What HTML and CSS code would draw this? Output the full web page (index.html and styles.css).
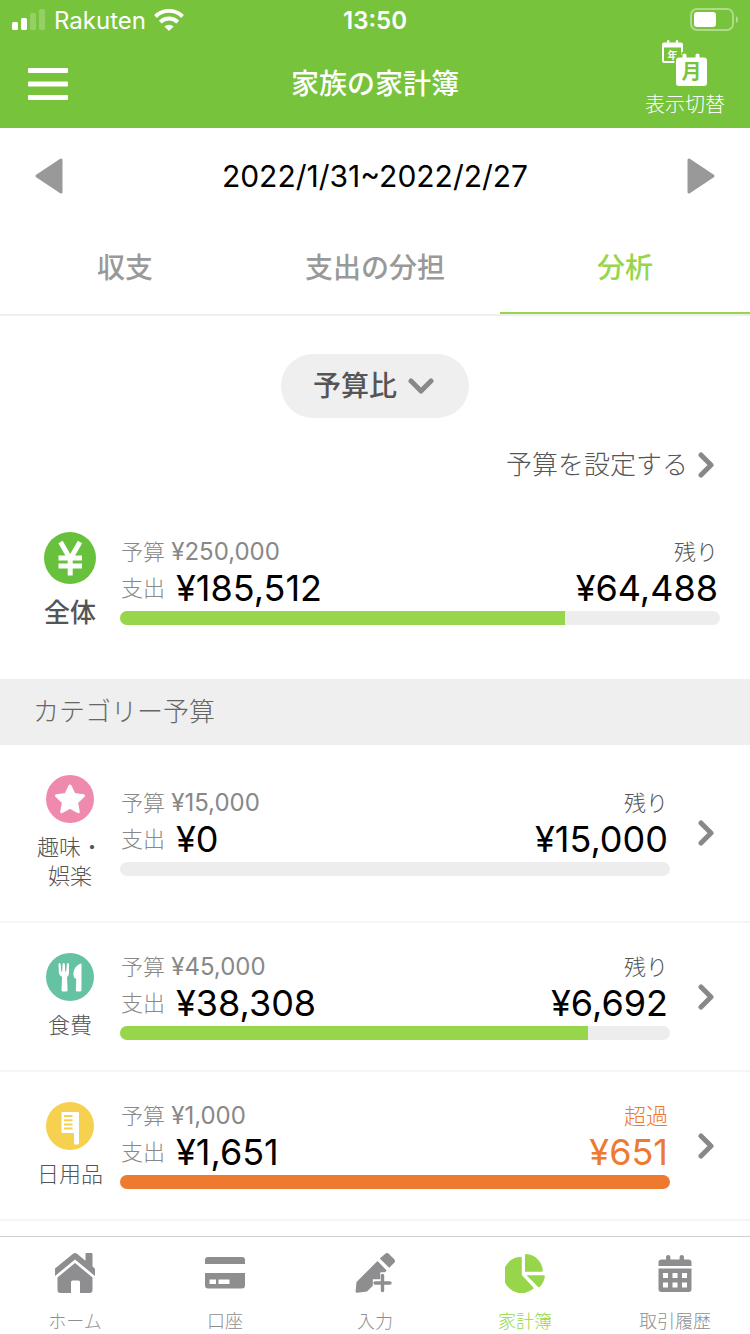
FILE: index.html
```html
<!DOCTYPE html>
<html lang="ja">
<head>
    <meta charset="UTF-8">
    <meta name="viewport" content="width=device-width, initial-scale=1.0">
    <title>家族の家計簿</title>
    <link rel="stylesheet" href="styles.css">
</head>
<body>
    <header class="header">
        <div class="status-bar">
            <div class="carrier">
                <svg width="34" height="22" viewBox="0 0 34 22" fill="#fff">
                    <rect x="0" y="13" width="6" height="8" rx="1.5"/>
                    <rect x="9" y="9" width="6" height="12" rx="1.5"/>
                    <rect x="18" y="4" width="6" height="17" rx="1.5" opacity=".22"/>
                    <rect x="27" y="0" width="6" height="21" rx="1.5" opacity=".22"/>
                </svg>
                <span>Rakuten</span>
                <svg width="30" height="22" viewBox="0 0 30 22" fill="none" stroke="#fff" stroke-width="4">
                    <path d="M1.500 7.500a19 19 0 0 1 27 0"/>
                    <path d="M6.300 13.200a12.300 12.300 0 0 1 17.400 0"/>
                    <path d="M15 22l-4.600-4.400a6.600 6.600 0 0 1 9.200 0z" fill="#fff" stroke="none"/>
                </svg>
            </div>
            <div class="time">13:50</div>
            <svg class="battery" width="48" height="24" viewBox="0 0 48 24">
                <rect x="1" y="1" width="42" height="21" rx="6" fill="none" stroke="#fff" stroke-opacity=".4" stroke-width="2"/>
                <rect x="4" y="4" width="22" height="15" rx="3" fill="#fff"/>
                <path d="M46 8q2 1 2 3.500t-2 3.500z" fill="#fff" opacity=".45"/>
            </svg>
        </div>
        <div class="title-bar">
            <button class="menu-button" type="button" aria-label="メニュー">
                <svg width="40" height="32" viewBox="0 0 40 32" fill="#fff">
                    <rect width="40" height="5" rx="1"/>
                    <rect y="13.500" width="40" height="5" rx="1"/>
                    <rect y="27" width="40" height="5" rx="1"/>
                </svg>
            </button>
            <h1 class="title">家族の家計簿</h1>
            <button class="switch-button" type="button">
                <svg width="46" height="48" viewBox="0 0 46 48">
                    <path d="M2 2.500h3V1q0-1 1.200-1t1.200 1v1.500h6.400V1q0-1 1.200-1t1.200 1v1.500H19q2 0 2 2V16H2v4.600h12V23H2q-2 0-2-2V4.500q0-2 2-2z" fill="#fff"/>
                    <rect x="2" y="7.500" width="17" height="13.500" fill="#77c33b"/>
                    <text class="calendar-year" x="10.500" y="18.500">年</text>
                    <path d="M12.500 48V18q0-3 4-3h3v-3h25v36z" fill="#77c33b"/>
                    <path d="M17 17.500h3.500V15q0-1.500 2-1.500t2 1.500v2.500h9V15q0-1.500 2-1.500t2 1.500v2.500H42q3 0 3 3V43q0 3-3 3H17q-3 0-3-3V20.500q0-3 3-3z" fill="#fff"/>
                    <text class="calendar-month" x="29.500" y="39">月</text>
                </svg>
                <span>表示切替</span>
            </button>
        </div>
    </header>

    <main>
        <div class="period">
            <button class="period-button" type="button" aria-label="前の期間">
                <svg width="28" height="36" viewBox="0 0 28 36"><path d="M26 2v32L2 18z" fill="#999" stroke="#999" stroke-width="3" stroke-linejoin="round"/></svg>
            </button>
            <span>2022/1/31~2022/2/27</span>
            <button class="period-button" type="button" aria-label="次の期間">
                <svg width="28" height="36" viewBox="0 0 28 36"><path d="M2 2v32l24-16z" fill="#999" stroke="#999" stroke-width="3" stroke-linejoin="round"/></svg>
            </button>
        </div>

        <nav class="tabs">
            <a class="tab" href="#balance">収支</a>
            <a class="tab" href="#share">支出の分担</a>
            <a class="tab active" href="#analysis">分析</a>
        </nav>

        <div class="select-wrap">
            <select class="select" aria-label="表示内容">
                <option>予算比</option>
            </select>
            <svg class="select-arrow" width="26" height="16" viewBox="0 0 26 16"><path d="M3 3l10 10L23 3" fill="none" stroke="#888" stroke-width="5" stroke-linecap="round" stroke-linejoin="round"/></svg>
        </div>

        <a class="set-budget" href="#budget">
            <span>予算を設定する</span>
            <svg width="16" height="26" viewBox="0 0 16 26"><path d="M3 3l10 10L3 23" fill="none" stroke="#888" stroke-width="5" stroke-linecap="round" stroke-linejoin="round"/></svg>
        </a>

        <section class="row total">
            <div class="category">
                <svg width="52" height="52" viewBox="0 0 52 52">
                    <circle cx="26" cy="26" r="26" fill="#68c13c"/>
                    <path d="M16.500 10L26.200 27 36 10M26.200 26v17.500M14.500 26h23.500M14.500 34h23.500" fill="none" stroke="#fff" stroke-width="5"/>
                </svg>
                <span class="category-name">全体</span>
            </div>
            <div class="budget">
                <div class="line">
                    <span class="label">予算 <span class="amount-small">¥250,000</span></span>
                    <span class="rest">残り</span>
                </div>
                <div class="line line-large">
                    <span class="label">支出</span>
                    <span class="amount">¥185,512</span>
                    <span class="amount rest-amount">¥64,488</span>
                </div>
                <div class="bar"><div class="bar-fill" style="width: 74.2%"></div></div>
            </div>
        </section>

        <h2 class="section-title">カテゴリー予算</h2>

        <a class="row" href="#hobby">
            <div class="category">
                <svg width="48" height="48" viewBox="0 0 48 48">
                    <circle cx="24" cy="24" r="24" fill="#ef8aae"/>
                    <path d="M24 11l4 8.500 9.500 1.200-7 6.600 1.800 9.500-8.300-4.500-8.300 4.500 1.800-9.500-7-6.600 9.500-1.200z" fill="#fff" stroke="#fff" stroke-width="3" stroke-linejoin="round"/>
                </svg>
                <span class="category-name">趣味・<br>娯楽</span>
            </div>
            <div class="budget">
                <div class="line">
                    <span class="label">予算 <span class="amount-small">¥15,000</span></span>
                    <span class="rest">残り</span>
                </div>
                <div class="line line-large">
                    <span class="label">支出</span>
                    <span class="amount">¥0</span>
                    <span class="amount rest-amount">¥15,000</span>
                </div>
                <div class="bar"></div>
            </div>
            <svg width="16" height="26" viewBox="0 0 16 26"><path d="M3 3l10 10L3 23" fill="none" stroke="#888" stroke-width="5" stroke-linecap="round" stroke-linejoin="round"/></svg>
        </a>

        <a class="row" href="#food">
            <div class="category">
                <svg width="48" height="48" viewBox="0 0 48 48">
                    <circle cx="24" cy="24" r="24" fill="#65c2a2"/>
                    <path d="M12.500 11.500q0-1.500 1-1.500t1.200 1.500l.5 7h1l.3-7q0-1.500 1.200-1.500t1.200 1.500l.3 7h1l.6-7q.1-1.500 1.200-1.500t1 1.500V20q-.4 3.300-2 4l.6 13q0 1.500-1.500 1.500h-3.200q-1.500 0-1.400-1.500l.6-13q-3-1.500-3.200-4z" fill="#fff"/>
                    <path d="M35 10.500q.5 0 .5 1V37q0 1.500-1.500 1.500h-2.800q-1.500 0-1.400-1.500l.5-11-2.300-1.500q-1.500-4 .5-8.500 2.500-4.500 6.500-5.500z" fill="#fff"/>
                </svg>
                <span class="category-name">食費</span>
            </div>
            <div class="budget">
                <div class="line">
                    <span class="label">予算 <span class="amount-small">¥45,000</span></span>
                    <span class="rest">残り</span>
                </div>
                <div class="line line-large">
                    <span class="label">支出</span>
                    <span class="amount">¥38,308</span>
                    <span class="amount rest-amount">¥6,692</span>
                </div>
                <div class="bar"><div class="bar-fill" style="width: 85.1%"></div></div>
            </div>
            <svg width="16" height="26" viewBox="0 0 16 26"><path d="M3 3l10 10L3 23" fill="none" stroke="#888" stroke-width="5" stroke-linecap="round" stroke-linejoin="round"/></svg>
        </a>

        <a class="row over" href="#daily">
            <div class="category">
                <svg width="48" height="48" viewBox="0 0 48 48">
                    <circle cx="24" cy="24" r="24" fill="#f6d04f"/>
                    <path d="M16.500 10H32q1 0 1 1v30.500q0 1-1 1h-3q-1 0-1-1V31H16.500q-1 0-1-1V11q0-1 1-1z" fill="#fff"/>
                    <path d="M18 14h8.500M18 18.200h8.500M18 22.400h8.500M18 26.600h8.500" stroke="#f6d04f" stroke-width="2"/>
                </svg>
                <span class="category-name">日用品</span>
            </div>
            <div class="budget">
                <div class="line">
                    <span class="label">予算 <span class="amount-small">¥1,000</span></span>
                    <span class="rest">超過</span>
                </div>
                <div class="line line-large">
                    <span class="label">支出</span>
                    <span class="amount">¥1,651</span>
                    <span class="amount rest-amount">¥651</span>
                </div>
                <div class="bar"><div class="bar-fill" style="width: 100%"></div></div>
            </div>
            <svg width="16" height="26" viewBox="0 0 16 26"><path d="M3 3l10 10L3 23" fill="none" stroke="#888" stroke-width="5" stroke-linecap="round" stroke-linejoin="round"/></svg>
        </a>
    </main>

    <nav class="bottom-nav">
        <a class="nav-item" href="#home">
            <svg width="40" height="40" viewBox="0 0 40 40" fill="currentColor">
                <path d="M0 15.500L18 .8q2-1.400 4 0l8.500 7V1q0-1 1-1h5q1 0 1 1v12.500l2.500 2.200V23L20 6.500 0 23z"/>
                <path d="M20 10l17.500 14.500V37q0 3-3 3H25V29q0-1.500-1.500-1.500h-6Q16 27.500 16 29v11H5.500q-3 0-3-3V24.500z"/>
            </svg>
            <span>ホーム</span>
        </a>
        <a class="nav-item" href="#account">
            <svg width="40" height="40" viewBox="0 0 40 40" fill="currentColor">
                <path d="M0 11V7q0-3 3-3h34q3 0 3 3v4z"/>
                <path fill-rule="evenodd" d="M0 20h40v12.500q0 3-3 3H3q-3 0-3-3zM4.500 26.500V31h6.500v-4.500zM13.500 26.500V31h11v-4.500z"/>
            </svg>
            <span>口座</span>
        </a>
        <a class="nav-item" href="#input">
            <svg width="40" height="40" viewBox="0 0 40 40" fill="currentColor">
                <path d="M24.800 5.500L30 1q2-2 4 0l5 5q2 2 0 4l-4.800 4.700z"/>
                <path d="M22.500 8l9.200 9.500-1.700 1.700h-4.700v7h-7.500v6.600L12 38.500l-10 1.300q-1.500.2-1.400-1.300L1.500 29z"/>
                <path d="M27.500 22.500v15M20 30h15" fill="none" stroke="currentColor" stroke-width="3.400" stroke-linecap="round"/>
            </svg>
            <span>入力</span>
        </a>
        <a class="nav-item active" href="#book">
            <svg width="40" height="40" viewBox="0 0 40 40" fill="currentColor">
                <path d="M16.800 5.200V22l11.500 12.500q.8 1-.3 1.600A18.200 18.200 0 1 1 15.300 3.800q1.500-.1 1.500 1.400z"/>
                <path d="M20 2.300q0-1.200 1.200-1.200A17.500 17.500 0 0 1 37.800 17.500q0 1.200-1.200 1.200H20z"/>
                <path d="M21.500 22.200h17q1.500 0 1.400 1.400-.8 6-5 10.200-1 1-2 0z"/>
            </svg>
            <span>家計簿</span>
        </a>
        <a class="nav-item" href="#history">
            <svg width="40" height="40" viewBox="0 0 40 40" fill="currentColor">
                <path d="M3.500 13V9.500q0-3 3-3H11V4q0-2 2.200-2t2.200 2v2.500h9.200V4q0-2 2.200-2T29 4v2.500h4.500q3 0 3 3V13z"/>
                <path fill-rule="evenodd" d="M3.500 15.500h33V36q0 3-3 3h-27q-3 0-3-3zM8 20v5h5v-5zM17.500 20v5h5v-5zM27 20v5h5v-5zM8 29.500v5h5v-5zM17.500 29.500v5h5v-5zM27 29.500v5h5v-5z"/>
            </svg>
            <span>取引履歴</span>
        </a>
    </nav>
</body>
</html>
```
FILE: styles.css
```css
:root {
    --header-green: #77c33b;
    --green: #97d64b;
    --orange: #ee7a30;
    --gray-bg: #efefef;
    --gray: #888;
    --text: #555;
}

* {
    box-sizing: border-box;
}

body {
    margin: 0;
    min-height: 100vh;
    display: flex;
    flex-direction: column;
    background-color: #fff;
    color: var(--text);
    font-family: Inter, 'Noto Sans CJK JP', sans-serif;
    font-weight: 300;
}

svg {
    display: block;
    flex-shrink: 0;
}

a {
    color: inherit;
    text-decoration: none;
}

button {
    padding: 0;
    border: none;
    background: none;
    color: inherit;
    font: inherit;
    cursor: pointer;
}

.header {
    background-color: var(--header-green);
    color: #fff;
}

.status-bar {
    display: grid;
    grid-template-columns: 1fr auto 1fr;
    align-items: center;
    height: 40px;
    padding: 0 12px;
    font-size: 24px;
    font-weight: 400;
}

.carrier {
    display: flex;
    align-items: center;
    gap: 8px;
}

.time {
    font-weight: 600;
}

.battery {
    justify-self: end;
}

.title-bar {
    display: grid;
    grid-template-columns: 1fr auto 1fr;
    align-items: center;
    height: 88px;
    padding: 0 25px 4px;
}

.menu-button {
    justify-self: start;
    padding: 4px 3px 0;
}

.title {
    margin: 0;
    font-size: 28px;
    font-weight: 500;
}

.switch-button {
    justify-self: end;
    display: flex;
    flex-direction: column;
    align-items: center;
    padding-bottom: 2px;
    font-size: 20px;
    line-height: 34px;
}

.calendar-year,
.calendar-month {
    text-anchor: middle;
    font-weight: 700;
}

.calendar-year {
    fill: #fff;
    font-size: 10px;
}

.calendar-month {
    fill: var(--header-green);
    font-size: 20px;
}

.period {
    display: flex;
    justify-content: space-between;
    align-items: center;
    height: 96px;
    padding: 0 35px;
    color: #000;
    font-size: 30px;
    font-weight: 400;
}

.tabs {
    display: flex;
    height: 92px;
    border-bottom: 2px solid #eee;
}

.tab {
    flex: 1;
    height: 90px;
    border-bottom: 2px solid transparent;
    color: #999;
    font-size: 28px;
    font-weight: 500;
    line-height: 88px;
    text-align: center;
}

.tab.active {
    border-color: var(--green);
    color: var(--green);
}

.select-wrap {
    position: relative;
    width: fit-content;
    margin: 38px auto 27px;
}

.select {
    display: block;
    height: 64px;
    padding: 0 71px 0 32px;
    border: none;
    border-radius: 32px;
    background-color: var(--gray-bg);
    color: var(--text);
    font-family: inherit;
    font-size: 28px;
    font-weight: 500;
    appearance: none;
}

.select-arrow {
    position: absolute;
    top: 24px;
    right: 35px;
    pointer-events: none;
}

.set-budget {
    display: flex;
    justify-content: flex-end;
    align-items: center;
    gap: 10px;
    padding-right: 36px;
    font-size: 26px;
    line-height: 39px;
}

.row {
    display: flex;
    align-items: center;
    padding: 30px 36px 30px 20px;
    border-bottom: 2px solid #f5f5f5;
}

.row > svg {
    margin-left: 28px;
}

.category {
    display: flex;
    flex-direction: column;
    align-items: center;
    gap: 10px;
    width: 100px;
    font-size: 22px;
    line-height: 29px;
    text-align: center;
}

.budget {
    flex: 1;
}

.line {
    display: flex;
    align-items: center;
    justify-content: space-between;
    height: 26px;
    padding: 0 2px 0 1px;
    font-size: 22px;
    line-height: 24px;
}

.line-large {
    height: 46px;
    gap: 11px;
}

.label {
    color: var(--gray);
}

.amount-small {
    font-size: 24px;
    font-weight: 400;
}

.amount {
    color: #000;
    font-size: 36px;
    font-weight: 400;
}

.rest-amount {
    margin-left: auto;
}

.bar {
    height: 14px;
    border-radius: 7px;
    background-color: #ededed;
    overflow: hidden;
}

.bar-fill {
    height: 100%;
    background-color: var(--green);
}

.over .rest,
.over .rest-amount {
    color: var(--orange);
}

.over .bar-fill {
    background-color: var(--orange);
}

.total {
    padding: 48px 30px 48px 20px;
    border: none;
}

.total .category {
    font-size: 26px;
    font-weight: 500;
    line-height: 37px;
}

.section-title {
    margin: 0;
    padding: 0 33px;
    background-color: var(--gray-bg);
    color: #666;
    font-size: 26px;
    font-weight: 300;
    line-height: 66px;
}

.bottom-nav {
    position: sticky;
    bottom: 0;
    display: flex;
    margin-top: auto;
    padding-top: 16px;
    border-top: 1px solid #d0d0d0;
    background-color: #fff;
}

.nav-item {
    flex: 1;
    display: flex;
    flex-direction: column;
    align-items: center;
    gap: 17px;
    color: #8e8e90;
    font-size: 18px;
    line-height: 24px;
}

.nav-item.active {
    color: var(--green);
}
```
